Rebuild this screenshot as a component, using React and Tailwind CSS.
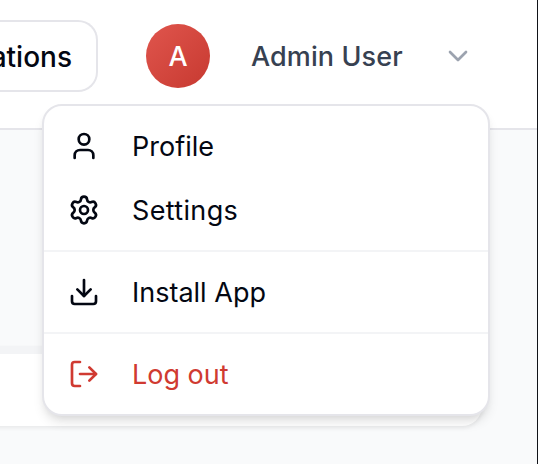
import React from 'react';
import { User, Settings, Download, LogOut, ChevronDown } from 'lucide-react';

function MenuItem({ icon: Icon, label, danger, tracking = '' }) {
  return (
    <button
      className={`flex h-16 w-full items-center gap-8 px-6 text-left text-[27px] leading-10 ${
        danger ? 'text-[#d03a31]' : 'text-[#030712]'
      }`}
    >
      <Icon size={32} strokeWidth={2} className="shrink-0" />
      <span className={`pt-px ${tracking}`}>{label}</span>
    </button>
  );
}

function Header() {
  return (
    <header className="flex h-[130px] items-start border-b-2 border-[#e5e5ea] bg-white">
      <button className="mt-5 flex h-[72px] w-[98px] shrink-0 items-center justify-end rounded-r-[20px] border-y-2 border-r-2 border-[#e5e5ea] pr-6 text-[28px] font-[480] text-[#030712]">
        <span className="pt-px">ations</span>
      </button>
      <div className="mt-6 ml-12 flex h-16 w-16 shrink-0 items-center justify-center rounded-full bg-linear-to-br from-[#e0554d] to-[#c73930] text-[27px] font-[450] text-white">
        <span className="pt-[3px]">A</span>
      </div>
      <div className="mt-6 ml-[41px] flex h-16 w-[223px] items-center justify-between text-[27px] font-[450] tracking-[0.1px] text-[#374151]">
        <span className="pt-[3px] whitespace-nowrap">Admin User</span>
        <ChevronDown size={32} className="text-[#9ca3af]" />
      </div>
    </header>
  );
}

function UserMenu() {
  return (
    <div className="absolute top-[104px] left-[42px] w-[448px] divide-y-2 divide-[#f3f4f6] rounded-[20px] border-2 border-[#e5e5ea] bg-white shadow-[0_8px_12px_-2px_rgba(0,0,0,0.1),0_4px_8px_-4px_rgba(0,0,0,0.1)]">
      <div className="py-2">
        <MenuItem icon={User} label="Profile" />
        <MenuItem icon={Settings} label="Settings" tracking="tracking-[0.35px]" />
      </div>
      <div className="py-2">
        <MenuItem icon={Download} label="Install App" />
      </div>
      <div className="py-2">
        <MenuItem icon={LogOut} label="Log out" danger />
      </div>
    </div>
  );
}

export default function App() {
  return (
    <div className="relative h-[464px] w-[538px] overflow-hidden border-r border-[#111318] bg-[#f9fafb] font-['Inter','Liberation_Sans',sans-serif]">
      <Header />
      <main className="pt-[216px] pr-[55px]">
        <div className="-ml-4 h-20 rounded-br-[20px] border-t-8 border-[#f3f4f6] bg-white shadow-[0_2px_4px_rgba(0,0,0,0.07)]" />
      </main>
      <UserMenu />
    </div>
  );
}
